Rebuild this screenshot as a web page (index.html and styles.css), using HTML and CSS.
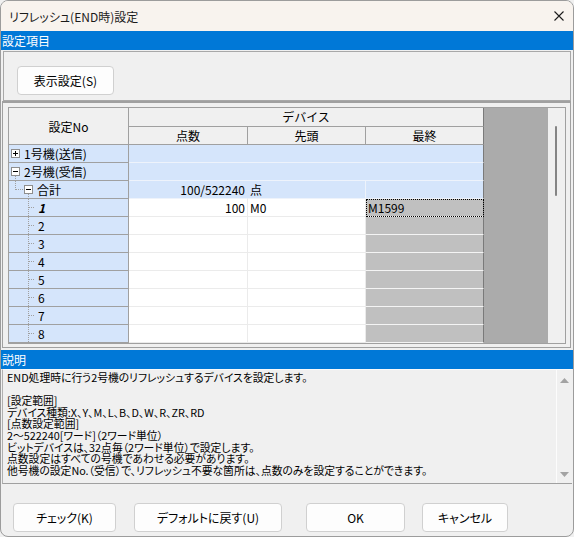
FILE: index.html
```html
<!DOCTYPE html>
<html lang="ja">
<head>
<meta charset="utf-8">
<title>リフレッシュ(END時)設定</title>
<link rel="stylesheet" href="styles.css">
</head>
<body>
<div class="window">
  <div class="titlebar">
    <span class="title">リフレッシュ(END時)設定</span>
    <svg class="close" width="10" height="10" viewBox="0 0 10 10"><path d="M0.5 0.5L9.5 9.5M9.5 0.5L0.5 9.5" stroke="#1c1c1c" stroke-width="1.1" fill="none"/></svg>
  </div>
  <div class="band">設定項目</div>
  <div class="settings">
    <div class="toolbar"><button class="btn btn-display">表示設定(S)</button></div>
    <div class="gridframe">
      <div class="gridbox">
        <div class="grid">
          <div class="c h hno">設定No</div>
          <div class="c h hdev">デバイス</div>
          <div class="c h">点数</div>
          <div class="c h">先頭</div>
          <div class="c h hlast">最終</div>

          <div class="c lab"><svg class="tree" width="15" height="17" viewBox="0 0 15 17"><rect x="2.5" y="4.5" width="8" height="8" fill="#fff" stroke="#8e8e8e"/><path d="M4 8.5H9M6.5 6V11" stroke="#000"/></svg><span>1号機(送信)</span></div>
          <div class="c bl span3"></div>

          <div class="c lab"><svg class="tree" width="15" height="17" viewBox="0 0 15 17"><rect x="2.5" y="4.5" width="8" height="8" fill="#fff" stroke="#8e8e8e"/><path d="M4 8.5H9" stroke="#000"/><path d="M6.5 13V17" stroke="#a0a0a0" stroke-dasharray="1 1"/></svg><span>2号機(受信)</span></div>
          <div class="c bl span3"></div>

          <div class="c lab"><svg class="tree" width="28" height="17" viewBox="0 0 28 17"><path d="M6.5 0V9M7 8.5H15M19.5 13V17" stroke="#a0a0a0" stroke-dasharray="1 1"/><rect x="15.5" y="4.5" width="8" height="8" fill="#fff" stroke="#8e8e8e"/><path d="M17 8.5H22" stroke="#000"/></svg><span>合計</span></div>
          <div class="c bl merge num">100/522240</div>
          <div class="c bl sep txt">点</div>
          <div class="c bl last"></div>

          <div class="c lab"><svg class="tree" width="29" height="17" viewBox="0 0 29 17"><path d="M19.5 0V17M20 8.5H25" stroke="#a0a0a0" stroke-dasharray="1 1"/></svg><span class="sel">1</span></div>
          <div class="c w num">100</div>
          <div class="c w txt">M0</div>
          <div class="c g txt focus">M1599</div>

          <div class="c lab"><svg class="tree" width="29" height="17" viewBox="0 0 29 17"><path d="M19.5 0V17M20 8.5H25" stroke="#a0a0a0" stroke-dasharray="1 1"/></svg><span>2</span></div>
          <div class="c w"></div><div class="c w"></div><div class="c g"></div>

          <div class="c lab"><svg class="tree" width="29" height="17" viewBox="0 0 29 17"><path d="M19.5 0V17M20 8.5H25" stroke="#a0a0a0" stroke-dasharray="1 1"/></svg><span>3</span></div>
          <div class="c w"></div><div class="c w"></div><div class="c g"></div>

          <div class="c lab"><svg class="tree" width="29" height="17" viewBox="0 0 29 17"><path d="M19.5 0V17M20 8.5H25" stroke="#a0a0a0" stroke-dasharray="1 1"/></svg><span>4</span></div>
          <div class="c w"></div><div class="c w"></div><div class="c g"></div>

          <div class="c lab"><svg class="tree" width="29" height="17" viewBox="0 0 29 17"><path d="M19.5 0V17M20 8.5H25" stroke="#a0a0a0" stroke-dasharray="1 1"/></svg><span>5</span></div>
          <div class="c w"></div><div class="c w"></div><div class="c g"></div>

          <div class="c lab"><svg class="tree" width="29" height="17" viewBox="0 0 29 17"><path d="M19.5 0V17M20 8.5H25" stroke="#a0a0a0" stroke-dasharray="1 1"/></svg><span>6</span></div>
          <div class="c w"></div><div class="c w"></div><div class="c g"></div>

          <div class="c lab"><svg class="tree" width="29" height="17" viewBox="0 0 29 17"><path d="M19.5 0V17M20 8.5H25" stroke="#a0a0a0" stroke-dasharray="1 1"/></svg><span>7</span></div>
          <div class="c w"></div><div class="c w"></div><div class="c g"></div>

          <div class="c lab"><svg class="tree" width="29" height="17" viewBox="0 0 29 17"><path d="M19.5 0V17M20 8.5H25" stroke="#a0a0a0" stroke-dasharray="1 1"/></svg><span>8</span></div>
          <div class="c w"></div><div class="c w"></div><div class="c g"></div>
        </div>
        <div class="filler"></div>
        <div class="vscroll"><div class="thumb"></div></div>
      </div>
    </div>
  </div>
  <div class="band">説明</div>
  <div class="desc">
    <div class="desc-text">
      <div class="ln">END処理時に行う2号機のリフレッシュするデバイスを設定します。</div>
      <div class="ln">&nbsp;</div>
      <div class="ln">[設定範囲]</div>
      <div class="ln">デバイス種類:X、Y、M、L、B、D、W、R、ZR、RD</div>
      <div class="ln">[点数設定範囲]</div>
      <div class="ln">2～522240[ワード]（2ワード単位）</div>
      <div class="ln">ビットデバイスは、32点毎（2ワード単位）で設定します。</div>
      <div class="ln">点数設定はすべての号機であわせる必要があります。</div>
      <div class="ln">他号機の設定No.（受信）で、リフレッシュ不要な箇所は、点数のみを設定することができます。</div>
    </div>
    <div class="desc-scroll">
      <svg width="9" height="5" viewBox="0 0 9 5"><path d="M0 5L4.5 0L9 5Z" fill="#a3a3a3"/></svg>
      <svg width="9" height="5" viewBox="0 0 9 5"><path d="M0 0L4.5 5L9 0Z" fill="#a3a3a3"/></svg>
    </div>
  </div>
  <div class="footer">
    <button class="btn btn-check">チェック(K)</button>
    <button class="btn btn-default">デフォルトに戻す(U)</button>
    <button class="btn btn-ok">OK</button>
    <button class="btn btn-cancel">キャンセル</button>
  </div>
</div>
</body>
</html>
```
FILE: styles.css
```css
* { box-sizing: border-box; }
html, body { margin: 0; padding: 0; }
body {
  width: 574px;
  height: 537px;
  overflow: hidden;
  background: #f0f0f0;
  font-family: "Noto Sans CJK JP", "Noto Sans", sans-serif;
  font-size: 12px;
  color: #000;
}
.window {
  width: 574px;
  height: 537px;
  border: 1px solid #9c9c9c;
  border-radius: 8px;
  background: #f0f0f0;
  overflow: hidden;
  display: flex;
  flex-direction: column;
}
.titlebar {
  flex: none;
  height: 30px;
  background: #f8f3ee;
  display: flex;
  align-items: center;
  padding-left: 8px;
}
.title {
  font-size: 12px;
  font-feature-settings: "palt";
  color: #1b1b1b;
}
.close { margin-left: auto; margin-right: 9px; }
.band {
  flex: none;
  height: 19px;
  background: #0078d7;
  color: #fff;
  font-size: 12px;
  line-height: 19px;
  padding-left: 1px;
}
.settings { flex: none; }
.toolbar {
  margin: 1px 0 0 2px;
  width: 568px;
  height: 50px;
  border: 1px solid #a8a8a8;
  padding: 14px 0 0 13px;
}
.btn {
  font-family: "Noto Sans CJK JP", "Noto Sans", sans-serif;
  font-size: 12px;
  font-feature-settings: "palt";
  color: #000;
  background: #fdfdfd;
  border: 1px solid #d0d0d0;
  border-radius: 4px;
  height: 29px;
  padding: 0;
}
.btn-display { width: 97px; }
.gridframe {
  margin: 0 0 2px 1px;
  width: 569px;
  height: 247px;
  border: 1px solid #a0a0a0;
  border-top-width: 2px;
  padding: 4px 4px 3px 5px;
}
.gridbox {
  display: flex;
  width: 558px;
  border: 1px solid #a0a0a0;
  background: #f0f0f0;
}
.grid {
  display: grid;
  grid-template-columns: 120px 119px 118px 118px;
  grid-template-rows: 19px 18px repeat(11, 18px);
  width: 475px;
  flex: none;
}
.c {
  border-right: 1px solid #a0a0a0;
  border-bottom: 1px solid #a0a0a0;
  overflow: hidden;
  white-space: nowrap;
  line-height: 17px;
}
.h {
  background: #f0f0f0;
  text-align: center;
}
.hno {
  grid-row: 1 / 3;
  display: flex;
  align-items: center;
  justify-content: center;
}
.hdev { grid-column: 2 / 5; line-height: 18px; border-right-color: #7a7a7a; }
.hlast { border-right-color: #7a7a7a; }
.lab {
  background: #d5e5fb;
  display: flex;
  align-items: center;
}
.tree { flex: none; display: block; shape-rendering: crispEdges; }
.sel { font-weight: bold; font-style: italic; }
.bl {
  background: #d5e5fb;
  border-right-color: #d5e5fb;
  border-bottom-color: #eef3fb;
}
.span3 { grid-column: 2 / 5; border-right-color: #7a7a7a; }
.sep { border-right-color: #eef3fb; }
.last { border-right-color: #7a7a7a; }
.w {
  background: #fff;
  border-right-color: #ebebeb;
  border-bottom-color: #ebebeb;
}
.g {
  background: #c0c0c0;
  border-right-color: #7a7a7a;
  border-bottom-color: #f4f4f4;
}
.num { text-align: right; padding-right: 2px; }
.txt { padding-left: 2px; }
.focus { outline: 1px dotted #000; outline-offset: -1px; }
.filler { width: 64px; flex: none; background: #ababab; }
.vscroll { flex: 1; background: #f0f0f0; padding: 18px 0 0 7px; }
.thumb { width: 2px; height: 70px; background: #858585; border-radius: 1px; }
.desc {
  flex: none;
  margin-left: 1px;
  width: 570px;
  height: 115px;
  border-top: 1px solid #fafafa;
  border-left: 1px solid #b0b0b0;
  border-bottom: 1px solid #a0a0a0;
  display: flex;
}
.desc-text {
  flex: 1;
  padding: 2px 0 0 4px;
  font-size: 10.8px;
  line-height: 11.6px;
  font-feature-settings: "palt";
  white-space: nowrap;
  overflow: hidden;
}
.desc-scroll {
  flex: none;
  width: 16px;
  border-left: 1px solid #fcfcfc;
  display: flex;
  flex-direction: column;
  align-items: center;
  justify-content: space-between;
  padding: 8px 0 6px;
}
.desc-scroll svg { display: block; }
.footer {
  flex: 1;
  display: flex;
  align-items: flex-start;
  padding: 19px 0 0 12px;
}
.btn-check { width: 103px; }
.btn-default { width: 148px; margin-left: 18px; }
.btn-ok { width: 99px; margin-left: 24px; }
.btn-cancel { width: 86px; margin-left: 17px; }
```
